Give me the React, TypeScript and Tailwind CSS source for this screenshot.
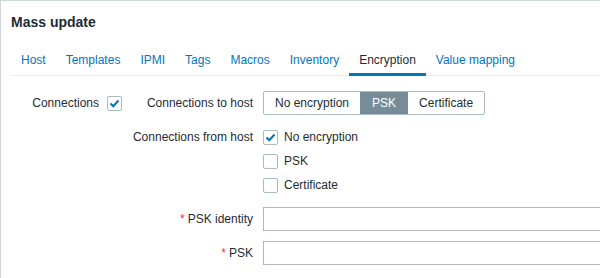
import React from "react";

const tabs = ["Host", "Templates", "IPMI", "Tags", "Macros", "Inventory", "Encryption", "Value mapping"];

function Check({ checked }: { checked?: boolean }) {
  return (
    <span className="flex h-[15px] w-[15px] shrink-0 items-center justify-center rounded-[2px] border border-[#acbbc2] bg-white">
      {checked && (
        <svg width="11" height="11" viewBox="0 0 11 11">
          <polyline points="1.5,5.5 4.3,8.2 9.5,2.5" fill="none" stroke="#0275b8" strokeWidth="2" />
        </svg>
      )}
    </span>
  );
}

function Label({ children, required }: { children: React.ReactNode; required?: boolean }) {
  return (
    <div className="h-[24px] whitespace-nowrap text-right leading-[24px]">
      {required && <span className="mr-[3px] text-[#e33734]">*</span>}
      {children}
    </div>
  );
}

export default function App() {
  return (
    <div className="h-[278px] w-[600px] overflow-hidden border-l border-t border-[#cfd6da] bg-white px-[10px] font-['Liberation_Sans',Arial,sans-serif] text-[12px] text-[#1f2c33]">
      {/* HEADER */}
      <h2 className="pt-[13px] text-[14px] font-bold leading-[17px]">Mass update</h2>

      {/* TABS */}
      <ul className="mt-[16px] -mr-[10px] flex border-b border-[#ebeef0]">
        {tabs.map((t) => (
          <li
            key={t}
            className={`-mb-px border-b-[3px] px-[10px] pb-[6px] pt-[6px] leading-[14px] ${
              t === "Encryption" ? "border-[#0275b8] text-[#1f2c33]" : "border-transparent text-[#0275b8]"
            }`}
          >
            {t}
          </li>
        ))}
      </ul>

      {/* FORM */}
      <div className="flex items-start pt-[15px]">
        <div className="w-[88px] shrink-0">
          <Label>Connections</Label>
        </div>
        <div className="ml-[8px] flex h-[24px] shrink-0 items-center">
          <Check checked />
        </div>

        <div className="ml-[10px] grid shrink-0 grid-cols-[121px_auto] gap-x-[10px] gap-y-[10px]">
          <Label>Connections to host</Label>
          <div className="flex h-[24px] w-fit overflow-hidden rounded-[2px] border border-[#acbbc2] leading-[22px]">
            <span className="px-[11px]">No encryption</span>
            <span className="bg-[#768d99] px-[12px] text-white">PSK</span>
            <span className="px-[11px]">Certificate</span>
          </div>

          <Label>Connections from host</Label>
          <div className="flex flex-col">
            {[
              ["No encryption", true],
              ["PSK", false],
              ["Certificate", false],
            ].map(([name, on]) => (
              <div key={name as string} className="flex h-[24px] items-center gap-[6px] whitespace-nowrap">
                <Check checked={on as boolean} />
                <span>{name}</span>
              </div>
            ))}
          </div>

          <Label required>PSK identity</Label>
          <input className="h-[24px] w-[460px] border border-[#acbbc2] bg-white px-[5px] outline-none" />

          <Label required>PSK</Label>
          <input className="h-[24px] w-[460px] border border-[#acbbc2] bg-white px-[5px] outline-none" />
        </div>
      </div>
    </div>
  );
}
